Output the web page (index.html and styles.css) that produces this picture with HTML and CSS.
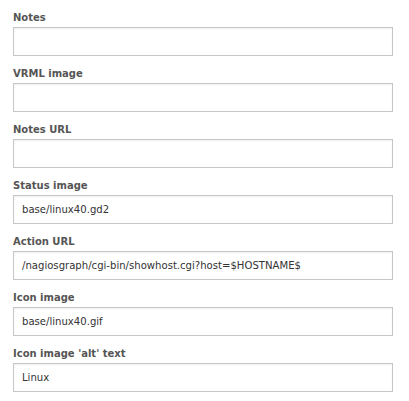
FILE: index.html
```html
<!DOCTYPE html>
<html>
<head>
<meta charset="utf-8">
<link rel="stylesheet" href="styles.css">
</head>
<body>
<form class="form">
  <div class="field">
    <label class="label">Notes</label>
    <input class="input" type="text" value="">
  </div>
  <div class="field">
    <label class="label">VRML image</label>
    <input class="input" type="text" value="">
  </div>
  <div class="field">
    <label class="label">Notes URL</label>
    <input class="input" type="text" value="">
  </div>
  <div class="field">
    <label class="label">Status image</label>
    <input class="input" type="text" value="base/linux40.gd2">
  </div>
  <div class="field">
    <label class="label">Action URL</label>
    <input class="input" type="text" value="/nagiosgraph/cgi-bin/showhost.cgi?host=$HOSTNAME$">
  </div>
  <div class="field">
    <label class="label">Icon image</label>
    <input class="input" type="text" value="base/linux40.gif">
  </div>
  <div class="field">
    <label class="label">Icon image 'alt' text</label>
    <input class="input" type="text" value="Linux">
  </div>
</form>
</body>
</html>
```
FILE: styles.css
```css
html, body {
  margin: 0;
  padding: 0;
  background: #fff;
}
body {
  font-family: "DejaVu Sans", Verdana, sans-serif;
}
.form {
  display: flex;
  flex-direction: column;
  gap: 10px;
  padding: 10px 0 0 13px;
}
.field {
  display: flex;
  flex-direction: column;
  gap: 2px;
}
.label {
  font-size: 10px;
  font-weight: bold;
  line-height: 15px;
  color: #555;
}
.input {
  box-sizing: border-box;
  width: 380px;
  height: 29px;
  margin: 0;
  padding: 0 8px;
  border: 1px solid #c6c6c6;
  box-shadow: inset 0 1px 2px rgba(0,0,0,0.06);
  background: #fff;
  font-family: "DejaVu Sans", Verdana, sans-serif;
  font-size: 10.1px;
  color: #333;
  outline: none;
}
```
